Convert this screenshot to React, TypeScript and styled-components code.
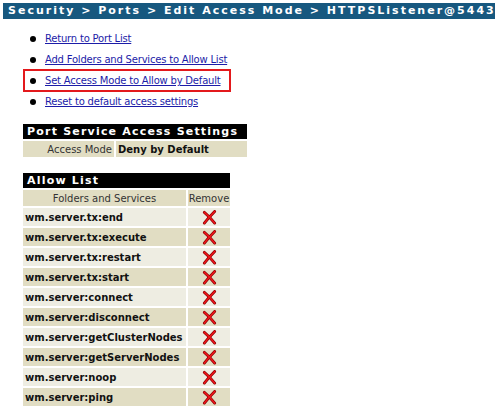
import React from "react";
import styled, { createGlobalStyle } from "styled-components";

const Global = createGlobalStyle`
  html, body { margin: 0; padding: 0; background: #fff; }
  body { font-family: "DejaVu Sans", Verdana, sans-serif; font-size: 10px; color: #000; }
`;

const Page = styled.div`
  padding: 3px 5px 0 3px;
  width: 500px;
  box-sizing: border-box;
`;

const TitleBar = styled.div`
  height: 16px;
  line-height: 16px;
  background: #17587f;
  color: #fff;
  font-family: "DejaVu Sans", Verdana, sans-serif;
  font-weight: bold;
  font-size: 11px;
  letter-spacing: 2px;
  padding-left: 5px;
  white-space: nowrap;
  overflow: hidden;
`;

const LinkList = styled.ul`
  list-style: none;
  margin: 9px 0 0 21px;
  padding: 0;
`;

const LinkItem = styled.li<{ $highlight?: boolean }>`
  display: flex;
  align-items: center;
  width: fit-content;
  height: 21px;
  padding: 0 9px 0 6px;
  gap: 9px;
  outline: ${(p) => (p.$highlight ? "2px solid #e3191c" : "none")};
  outline-offset: -1px;
`;

const Bullet = styled.span`
  width: 6px;
  height: 6px;
  border-radius: 50%;
  background: #000;
  flex: none;
`;

const Link = styled.a`
  color: #1c1ca8;
  text-decoration: underline;
  font-family: "DejaVu Sans", Verdana, sans-serif;
  font-size: 10px;
  letter-spacing: -0.2px;
  white-space: nowrap;
`;

const Panel = styled.div<{ $cols: string; $top: number }>`
  display: grid;
  grid-template-columns: ${(p) => p.$cols};
  gap: 2px;
  margin: ${(p) => p.$top}px 0 0 20px;
  width: fit-content;
`;

const PanelTitle = styled.div`
  grid-column: 1 / -1;
  background: #000;
  color: #fff;
  font-weight: bold;
  font-size: 11px;
  letter-spacing: 1.2px;
  height: 15px;
  line-height: 15px;
  padding-left: 4px;
  white-space: nowrap;
`;

const Cell = styled.div<{ $bg: string; $align?: string; $bold?: boolean; $h?: number }>`
  background: ${(p) => p.$bg};
  font-weight: ${(p) => (p.$bold ? "bold" : "normal")};
  font-size: 10px;
  height: ${(p) => p.$h || 16}px;
  padding: 0 2px;
  white-space: nowrap;
  display: flex;
  align-items: center;
  justify-content: ${(p) =>
    p.$align === "right" ? "flex-end" : p.$align === "center" ? "center" : "flex-start"};
  color: ${(p) => (p.$bold ? "#111" : "#333")};
`;

const BEIGE = "#e1ddc3";
const LIGHT = "#eeede2";

const RemoveIcon = () => (
  <svg width="15" height="15" viewBox="0 0 16 16">
    <path d="M2.5 2.5 Q8 7 13.5 14" stroke="#8a0000" strokeWidth="3" fill="none" strokeLinecap="round" />
    <path d="M13.5 1.5 Q7 8 2.5 14" stroke="#8a0000" strokeWidth="3" fill="none" strokeLinecap="round" />
    <path d="M2.5 2.5 Q8 7 13.5 14" stroke="#f0161b" strokeWidth="1.6" fill="none" strokeLinecap="round" />
    <path d="M13.5 1.5 Q7 8 2.5 14" stroke="#f0161b" strokeWidth="1.6" fill="none" strokeLinecap="round" />
  </svg>
);

const links = [
  "Return to Port List",
  "Add Folders and Services to Allow List",
  "Set Access Mode to Allow by Default",
  "Reset to default access settings",
];

const services = [
  "wm.server.tx:end",
  "wm.server.tx:execute",
  "wm.server.tx:restart",
  "wm.server.tx:start",
  "wm.server:connect",
  "wm.server:disconnect",
  "wm.server:getClusterNodes",
  "wm.server:getServerNodes",
  "wm.server:noop",
  "wm.server:ping",
];

export default function App() {
  return (
    <>
      <Global />
      <Page>
        <TitleBar>Security &gt; Ports &gt; Edit Access Mode &gt; HTTPSListener@5443</TitleBar>
        <LinkList>
          {links.map((l, i) => (
            <LinkItem key={l} $highlight={i === 2}>
              <Bullet />
              <Link href="#">{l}</Link>
            </LinkItem>
          ))}
        </LinkList>
        <Panel $cols="91px 131px" $top={12}>
          <PanelTitle>Port Service Access Settings</PanelTitle>
          <Cell $bg={BEIGE} $align="right">Access Mode</Cell>
          <Cell $bg={BEIGE} $bold>Deny by Default</Cell>
        </Panel>
        <Panel $cols="163px 42px" $top={16}>
          <PanelTitle>Allow List</PanelTitle>
          <Cell $bg={BEIGE} $align="center">Folders and Services</Cell>
          <Cell $bg={BEIGE} $align="center">Remove</Cell>
          {services.map((s, i) => {
            const bg = i % 2 === 0 ? LIGHT : BEIGE;
            return (
              <React.Fragment key={s}>
                <Cell $bg={bg} $bold $h={18}>{s}</Cell>
                <Cell $bg={bg} $align="center" $h={18}><RemoveIcon /></Cell>
              </React.Fragment>
            );
          })}
        </Panel>
      </Page>
    </>
  );
}
